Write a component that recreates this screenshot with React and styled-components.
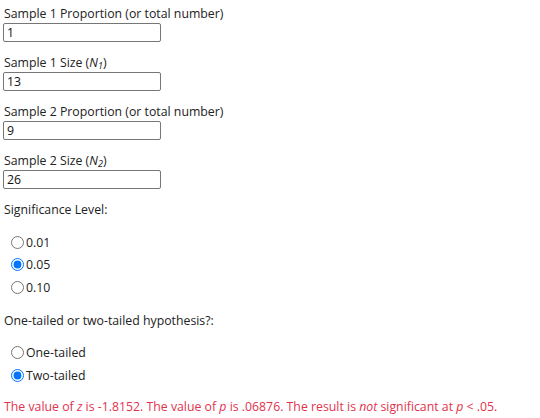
import React, { useState } from 'react';
import styled, { createGlobalStyle } from 'styled-components';

const GlobalStyle = createGlobalStyle`
  html, body {
    margin: 0;
    padding: 0;
    background: #fff;
  }
  body {
    font-family: "Open Sans", "Noto Sans", sans-serif;
    font-size: 12.3px;
    color: #222;
  }
`;

const Page = styled.div`
  padding: 5px 3px;
  display: flex;
  flex-direction: column;
`;

const Field = styled.div`
  display: flex;
  flex-direction: column;
  align-items: flex-start;
  margin-bottom: 12px;
`;

const Label = styled.label`
  display: block;
  line-height: 18px;
  margin-left: 1px;
`;

const Sub = styled.sub`
  font-size: 9px;
  vertical-align: -2px;
  line-height: 0;
`;

const TextInput = styled.input`
  box-sizing: border-box;
  width: 158px;
  height: 19px;
  margin: 0;
  padding: 0 3px;
  border: 1px solid #767676;
  border-radius: 2px;
  font-family: "Open Sans", "Noto Sans", sans-serif;
  font-size: 12.3px;
  color: #111;
  outline: none;
`;

const Heading = styled.div`
  line-height: 18px;
  margin-left: 1px;
`;

const RadioList = styled.div`
  display: flex;
  flex-direction: column;
  margin-top: 12px;
  margin-bottom: ${p => p.$bottom}px;
`;

const RadioRow = styled.label`
  display: flex;
  align-items: center;
  height: 22.5px;
  cursor: pointer;
`;

const Radio = styled.input`
  width: 13px;
  height: 13px;
  margin: 0 2px 0 8px;
  accent-color: #0075ff;
`;

const Result = styled.p`
  margin: 0 0 0 1px;
  color: #e2334d;
  line-height: 18px;
`;

const sizeLabel = (n) => (
  <>
    Sample {n} Size (<i>N</i><Sub><i>{n}</i></Sub>)
  </>
);

export default function App() {
  const [values, setValues] = useState({ p1: '1', n1: '13', p2: '9', n2: '26' });
  const [alpha, setAlpha] = useState('0.05');
  const [tails, setTails] = useState('two');

  const update = (key) => (e) => setValues({ ...values, [key]: e.target.value });

  const fields = [
    { key: 'p1', label: 'Sample 1 Proportion (or total number)' },
    { key: 'n1', label: sizeLabel(1) },
    { key: 'p2', label: 'Sample 2 Proportion (or total number)' },
    { key: 'n2', label: sizeLabel(2) },
  ];

  return (
    <>
      <GlobalStyle />
      <Page>
        {fields.map(f => (
          <Field key={f.key}>
            <Label>{f.label}</Label>
            <TextInput value={values[f.key]} onChange={update(f.key)} />
          </Field>
        ))}

        <Heading>Significance Level:</Heading>
        <RadioList $bottom={13}>
          {['0.01', '0.05', '0.10'].map(v => (
            <RadioRow key={v}>
              <Radio type="radio" name="alpha" checked={alpha === v} onChange={() => setAlpha(v)} />
              {v}
            </RadioRow>
          ))}
        </RadioList>

        <Heading>One-tailed or two-tailed hypothesis?:</Heading>
        <RadioList $bottom={11}>
          <RadioRow>
            <Radio type="radio" name="tails" checked={tails === 'one'} onChange={() => setTails('one')} />
            One-tailed
          </RadioRow>
          <RadioRow>
            <Radio type="radio" name="tails" checked={tails === 'two'} onChange={() => setTails('two')} />
            Two-tailed
          </RadioRow>
        </RadioList>

        <Result>
          The value of <i>z</i> is -1.8152. The value of <i>p</i> is .06876. The result is <i>not</i> significant at <i>p</i> &lt; .05.
        </Result>
      </Page>
    </>
  );
}
